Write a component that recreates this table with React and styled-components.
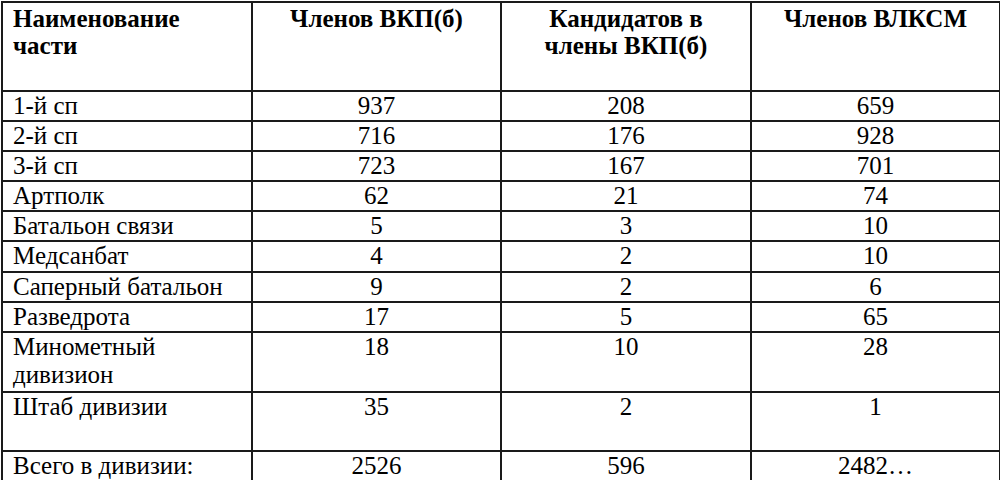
import styled, { createGlobalStyle } from "styled-components";

const GlobalStyle = createGlobalStyle`
  html, body {
    margin: 0;
    padding: 0;
    background: #ffffff;
  }
`;

const serif = `"Liberation Serif", "Times New Roman", serif`;

const rows = [
  { name: ["1-й сп"], members: "937", candidates: "208", komsomol: "659", height: 30 },
  { name: ["2-й сп"], members: "716", candidates: "176", komsomol: "928", height: 30 },
  { name: ["3-й сп"], members: "723", candidates: "167", komsomol: "701", height: 30 },
  { name: ["Артполк"], members: "62", candidates: "21", komsomol: "74", height: 30 },
  { name: ["Батальон связи"], members: "5", candidates: "3", komsomol: "10", height: 30 },
  { name: ["Медсанбат"], members: "4", candidates: "2", komsomol: "10", height: 31 },
  { name: ["Саперный батальон"], members: "9", candidates: "2", komsomol: "6", height: 30 },
  { name: ["Разведрота"], members: "17", candidates: "5", komsomol: "65", height: 30 },
  { name: ["Минометный", "дивизион"], members: "18", candidates: "10", komsomol: "28", height: 60 },
  { name: ["Штаб дивизии"], members: "35", candidates: "2", komsomol: "1", height: 59 },
  { name: ["Всего в дивизии:"], members: "2526", candidates: "596", komsomol: "2482…", height: 29 },
];

const Table = styled.table`
  border-collapse: collapse;
  table-layout: fixed;
  width: 998px;
  margin: 1px 0 0 1px;
  font-family: ${serif};
  font-size: 25px;
  line-height: 28px;
  color: #000;
`;

const Row = styled.tr`
  height: ${(p) => p.$height}px;
`;

const HeadCell = styled.th`
  border: 2px solid #1a1a1a;
  padding: 2px 10px 0 ${(p) => (p.$left ? "10px" : "10px")};
  vertical-align: top;
  font-family: ${serif};
  font-weight: bold;
  line-height: 27px;
  text-align: ${(p) => (p.$left ? "left" : "center")};
`;

const Cell = styled.td`
  border: 2px solid #1a1a1a;
  padding: 0 10px;
  vertical-align: top;
  white-space: nowrap;
  font-family: ${serif};
  text-align: ${(p) => (p.$left ? "left" : "center")};
`;

const Line = styled.span`
  display: block;
`;

export default function App() {
  return (
    <>
      <GlobalStyle />
      <Table>
        <colgroup>
          <col style={{ width: 250 }} />
          <col style={{ width: 249 }} />
          <col style={{ width: 250 }} />
          <col style={{ width: 249 }} />
        </colgroup>
        <thead>
          <Row $height={89}>
            <HeadCell $left>
              <Line>Наименование</Line>
              <Line>части</Line>
            </HeadCell>
            <HeadCell>Членов ВКП(б)</HeadCell>
            <HeadCell>
              <Line>Кандидатов в</Line>
              <Line>члены ВКП(б)</Line>
            </HeadCell>
            <HeadCell>Членов ВЛКСМ</HeadCell>
          </Row>
        </thead>
        <tbody>
          {rows.map((r) => (
            <Row key={r.name.join(" ")} $height={r.height}>
              <Cell $left>
                {r.name.map((l) => (
                  <Line key={l}>{l}</Line>
                ))}
              </Cell>
              <Cell>{r.members}</Cell>
              <Cell>{r.candidates}</Cell>
              <Cell>{r.komsomol}</Cell>
            </Row>
          ))}
        </tbody>
      </Table>
    </>
  );
}
